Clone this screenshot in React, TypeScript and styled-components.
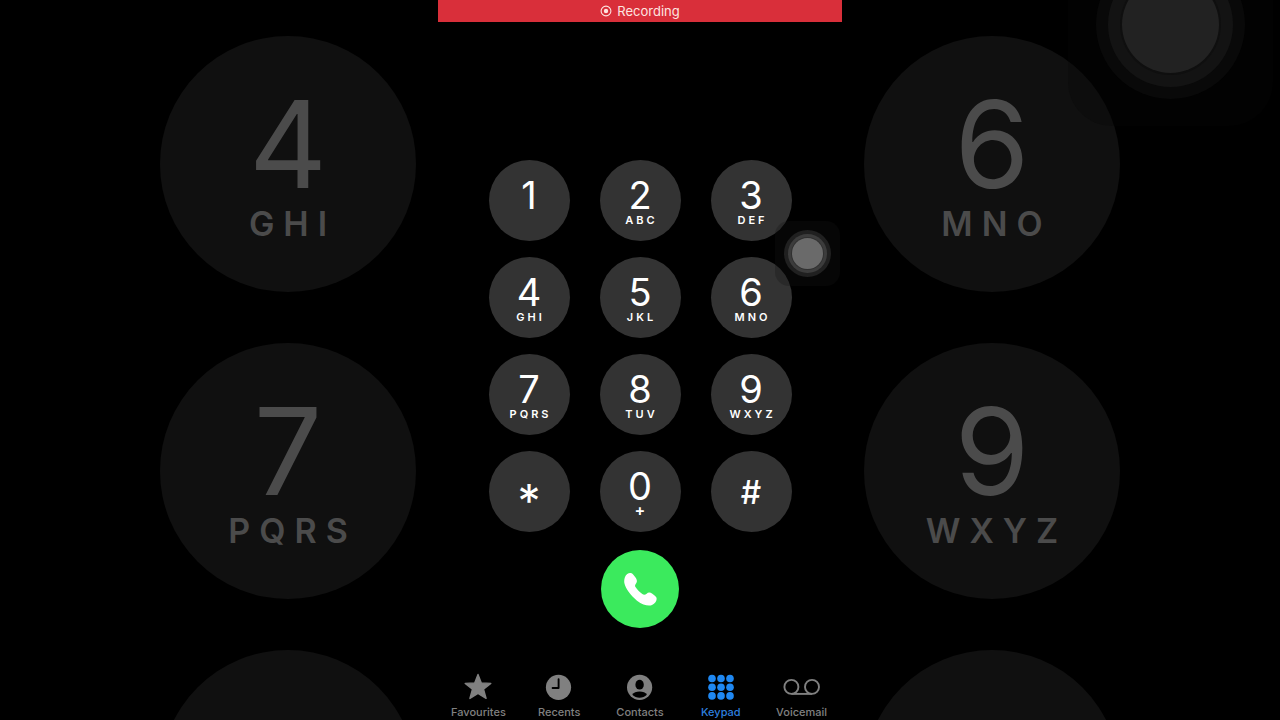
import React from "react";
import styled, { createGlobalStyle, css } from "styled-components";

const GlobalStyle = createGlobalStyle`
  *, *::before, *::after { box-sizing: border-box; }
  body {
    margin: 0;
    background: #000;
    color: #fff;
    font-family: Inter, "Liberation Sans", sans-serif;
  }
  button { font: inherit; color: inherit; border: 0; padding: 0; cursor: pointer; }
`;

const Page = styled.div`
  display: flex;
  height: 100vh;
  min-height: 640px;
  overflow: hidden;
  background: #000;
`;

const Side = styled.div<{ $align: "start" | "end" }>`
  position: relative;
  flex: 1 1 0;
  min-width: 0;
  overflow: hidden;
  display: flex;
  flex-direction: column;
  align-items: flex-${(p) => p.$align};
  gap: 51px;
  padding: 36px 22px 0;
`;

const LargeKey = styled.div`
  flex: none;
  width: 256px;
  height: 256px;
  padding-top: 48px;
  border-radius: 50%;
  background: #101010;
  color: #4b4b4b;
  text-align: center;
`;

const LargeDigit = styled.div`
  font-size: 121px;
  line-height: 120px;
`;

const LargeLetters = styled.div`
  font-size: 34px;
  line-height: 40px;
  font-weight: 600;
  letter-spacing: 9px;
  padding-left: 9px;
`;

const Phone = styled.main`
  position: relative;
  flex: 0 1 404px;
  display: flex;
  flex-direction: column;
  align-items: center;
  background: #000;
`;

const RecordingBar = styled.div`
  align-self: stretch;
  height: 22px;
  display: flex;
  align-items: center;
  justify-content: center;
  gap: 5px;
  background: #d92f3a;
  color: #fde4e0;
  font-size: 13px;
  line-height: 22px;
`;

const Keypad = styled.div`
  display: grid;
  grid-template-columns: repeat(3, 81px);
  gap: 16px 30px;
  margin-top: 138px;
`;

const Key = styled.button`
  display: flex;
  flex-direction: column;
  align-items: center;
  height: 81px;
  padding-top: 16px;
  border-radius: 50%;
  background: #333;
`;

const Digit = styled.span`
  font-size: 38px;
  line-height: 38px;
`;

const Letters = styled.span<{ $plus?: boolean }>`
  font-size: 11px;
  line-height: 12px;
  font-weight: 600;
  letter-spacing: 3px;
  padding-left: 3px;
  ${(p) =>
    p.$plus &&
    css`
      font-size: 16px;
      line-height: 10px;
      letter-spacing: 0;
      padding-left: 0;
    `}
`;

const Sign = styled.span<{ $star?: boolean }>`
  font-size: ${(p) => (p.$star ? 46 : 32)}px;
  line-height: ${(p) => (p.$star ? 68 : 52)}px;
  font-weight: ${(p) => (p.$star ? 400 : 500)};
`;

const CallButton = styled.button`
  display: grid;
  place-items: center;
  width: 78px;
  height: 78px;
  margin-top: 18px;
  border-radius: 50%;
  background: #3bea5d;
`;

const TabBar = styled.nav`
  align-self: stretch;
  display: flex;
  margin-top: auto;
`;

const Tab = styled.a<{ $active?: boolean }>`
  flex: 1 1 0;
  display: flex;
  flex-direction: column;
  align-items: center;
  gap: 4px;
  padding-bottom: 1px;
  color: ${(p) => (p.$active ? "#2d7fdf" : "#808080")};
  font-size: 11px;
  line-height: 14px;
  font-weight: 500;
  text-decoration: none;
  svg { display: block; color: ${(p) => (p.$active ? "#1f88f2" : "#808080")}; }
`;

const Touch = styled.button`
  position: absolute;
  top: 221px;
  right: 2px;
  display: grid;
  place-items: center;
  width: 65px;
  height: 65px;
  border-radius: 14px;
  background: rgba(20, 20, 20, 0.3);
`;

const TouchDot = styled.span`
  width: 31px;
  height: 31px;
  border-radius: 50%;
  background: #6a6a6a;
  box-shadow: 0 0 0 1px #303030, 0 0 0 4px #3c3c3c, 0 0 0 8px #202020;
`;

const LargeTouch = styled.div`
  position: absolute;
  top: -77px;
  left: 226px;
  display: grid;
  place-items: center;
  width: 205px;
  height: 203px;
  border-radius: 44px;
  background: rgba(8, 8, 8, 0.3);
`;

const LargeTouchDot = styled.div`
  width: 97px;
  height: 97px;
  border-radius: 50%;
  background: #222;
  box-shadow: 0 0 0 2px #0f0f0f, 0 0 0 14px #131313, 0 0 0 26px #090909;
`;

const KEYS: [string, string][] = [
  ["1", ""], ["2", "ABC"], ["3", "DEF"],
  ["4", "GHI"], ["5", "JKL"], ["6", "MNO"],
  ["7", "PQRS"], ["8", "TUV"], ["9", "WXYZ"],
  ["*", ""], ["0", "+"], ["#", ""],
];

const StarIcon = () => (
  <svg width="30" height="28" viewBox="0 0 30 28" fill="currentColor" stroke="currentColor" strokeWidth="1.4" strokeLinejoin="round">
    <path d="M15 1.4 18.3 9.9 27.8 10.4 20.5 16.2 23.1 25.4 15 20.4 6.9 25.4 9.5 16.2 2.2 10.4 11.7 9.9Z" />
  </svg>
);

const ClockIcon = () => (
  <svg width="30" height="28" viewBox="0 0 30 28" fill="none">
    <circle cx="14.5" cy="14.3" r="12.6" fill="currentColor" />
    <path d="M14.6 6.3V15H8.6" stroke="#000" strokeWidth="1.9" strokeLinecap="round" strokeLinejoin="round" />
  </svg>
);

const ContactIcon = () => (
  <svg width="30" height="28" viewBox="0 0 30 28">
    <circle cx="14.6" cy="14.3" r="12.6" fill="currentColor" />
    <ellipse cx="14.6" cy="11.7" rx="4.2" ry="4.9" fill="#000" />
    <path d="M7.3 21.8C8.6 19.4 11.2 18.4 14.6 18.4S20.6 19.4 21.9 21.8C19.9 23.7 17.4 24.7 14.6 24.7S9.3 23.7 7.3 21.8Z" fill="#000" />
  </svg>
);

const KeypadIcon = () => (
  <svg width="30" height="28" viewBox="0 0 30 28" fill="currentColor">
    {[5.5, 14.2, 22.9].map((y) =>
      [6, 15, 24].map((x) => <circle key={`${x}-${y}`} cx={x} cy={y} r="3.8" />)
    )}
  </svg>
);

const VoicemailIcon = () => (
  <svg width="38" height="28" viewBox="0 0 38 28" fill="none" stroke="currentColor" strokeWidth="1.9">
    <circle cx="8.4" cy="13.9" r="7" />
    <circle cx="29" cy="13.9" r="7" />
    <path d="M8.4 20.9H29" />
  </svg>
);

const TABS = [
  { label: "Favourites", Icon: StarIcon },
  { label: "Recents", Icon: ClockIcon },
  { label: "Contacts", Icon: ContactIcon },
  { label: "Keypad", Icon: KeypadIcon, active: true },
  { label: "Voicemail", Icon: VoicemailIcon },
];

function BackdropKey({ digit, letters }: { digit?: string; letters?: string }) {
  return (
    <LargeKey>
      {digit && <LargeDigit>{digit}</LargeDigit>}
      {letters && <LargeLetters>{letters}</LargeLetters>}
    </LargeKey>
  );
}

export default function App() {
  return (
    <>
      <GlobalStyle />
      <Page>
        <Side $align="end" aria-hidden="true">
          <BackdropKey digit="4" letters="GHI" />
          <BackdropKey digit="7" letters="PQRS" />
          <BackdropKey />
        </Side>
        <Phone>
          <RecordingBar role="status">
            <svg width="12" height="12" viewBox="0 0 12 12" fill="none">
              <circle cx="6" cy="6" r="4.9" stroke="currentColor" strokeWidth="1.1" />
              <circle cx="6" cy="6" r="2.2" fill="currentColor" />
            </svg>
            Recording
          </RecordingBar>
          <Keypad>
            {KEYS.map(([digit, letters]) => (
              <Key key={digit} type="button">
                {digit === "*" || digit === "#" ? (
                  <Sign $star={digit === "*"}>{digit}</Sign>
                ) : (
                  <Digit>{digit}</Digit>
                )}
                {letters && <Letters $plus={letters === "+"}>{letters}</Letters>}
              </Key>
            ))}
          </Keypad>
          <CallButton type="button" aria-label="Call">
            <svg width="33" height="33" viewBox="0 0 99 99" fill="#fff">
              <path d="M3 12C6 4 13 0 18 0C25 -1 28 5 34 13C39 20 40 25 37 30C34 35 31 38 35 43C41 52 47 57 55 63C60 67 64 65 68 62C72 58 78 57 85 62C94 68 98 72 98 77C98 84 93 92 84 96C75 100 57 97 39 83C20 67 5 48 1 30C0 22 1 17 3 12Z" />
            </svg>
          </CallButton>
          <TabBar>
            {TABS.map(({ label, Icon, active }) => (
              <Tab key={label} href={`#${label.toLowerCase()}`} $active={active} aria-current={active ? "page" : undefined}>
                <Icon />
                {label}
              </Tab>
            ))}
          </TabBar>
          <Touch type="button" aria-label="AssistiveTouch">
            <TouchDot />
          </Touch>
        </Phone>
        <Side $align="start" aria-hidden="true">
          <BackdropKey digit="6" letters="MNO" />
          <BackdropKey digit="9" letters="WXYZ" />
          <BackdropKey />
          <LargeTouch>
            <LargeTouchDot />
          </LargeTouch>
        </Side>
      </Page>
    </>
  );
}
